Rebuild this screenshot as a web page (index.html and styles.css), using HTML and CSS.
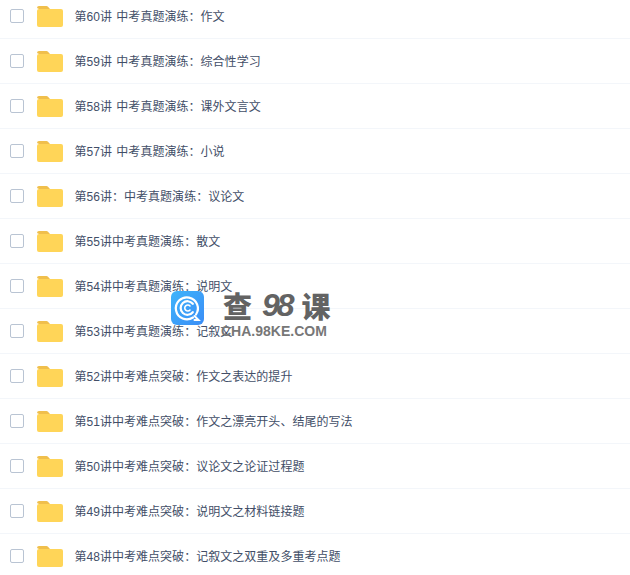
FILE: index.html
```html
<!DOCTYPE html>
<html lang="zh">
<head>
    <meta charset="UTF-8">
    <meta name="viewport" content="width=device-width, initial-scale=1.0">
    <title>文件列表</title>
    <link rel="stylesheet" href="styles.css">
</head>
<body>
    <ul class="file-list">
        <li class="file-row"><span class="check"></span><svg class="folder" viewBox="0 0 26 21"><use href="#folder-icon"></use></svg><span class="name">第60讲 中考真题演练：作文</span></li>
        <li class="file-row"><span class="check"></span><svg class="folder" viewBox="0 0 26 21"><use href="#folder-icon"></use></svg><span class="name">第59讲 中考真题演练：综合性学习</span></li>
        <li class="file-row"><span class="check"></span><svg class="folder" viewBox="0 0 26 21"><use href="#folder-icon"></use></svg><span class="name">第58讲 中考真题演练：课外文言文</span></li>
        <li class="file-row"><span class="check"></span><svg class="folder" viewBox="0 0 26 21"><use href="#folder-icon"></use></svg><span class="name">第57讲 中考真题演练：小说</span></li>
        <li class="file-row"><span class="check"></span><svg class="folder" viewBox="0 0 26 21"><use href="#folder-icon"></use></svg><span class="name">第56讲：中考真题演练：议论文</span></li>
        <li class="file-row"><span class="check"></span><svg class="folder" viewBox="0 0 26 21"><use href="#folder-icon"></use></svg><span class="name">第55讲中考真题演练：散文</span></li>
        <li class="file-row"><span class="check"></span><svg class="folder" viewBox="0 0 26 21"><use href="#folder-icon"></use></svg><span class="name">第54讲中考真题演练：说明文</span></li>
        <li class="file-row"><span class="check"></span><svg class="folder" viewBox="0 0 26 21"><use href="#folder-icon"></use></svg><span class="name">第53讲中考真题演练：记叙文</span></li>
        <li class="file-row"><span class="check"></span><svg class="folder" viewBox="0 0 26 21"><use href="#folder-icon"></use></svg><span class="name">第52讲中考难点突破：作文之表达的提升</span></li>
        <li class="file-row"><span class="check"></span><svg class="folder" viewBox="0 0 26 21"><use href="#folder-icon"></use></svg><span class="name">第51讲中考难点突破：作文之漂亮开头、结尾的写法</span></li>
        <li class="file-row"><span class="check"></span><svg class="folder" viewBox="0 0 26 21"><use href="#folder-icon"></use></svg><span class="name">第50讲中考难点突破：议论文之论证过程题</span></li>
        <li class="file-row"><span class="check"></span><svg class="folder" viewBox="0 0 26 21"><use href="#folder-icon"></use></svg><span class="name">第49讲中考难点突破：说明文之材料链接题</span></li>
        <li class="file-row"><span class="check"></span><svg class="folder" viewBox="0 0 26 21"><use href="#folder-icon"></use></svg><span class="name">第48讲中考难点突破：记叙文之双重及多重考点题</span></li>
    </ul>

    <div class="watermark">
        <svg class="wm-logo" viewBox="0 0 33 34">
            <defs>
                <linearGradient id="wm-grad" x1="0" y1="0" x2="1" y2="1">
                    <stop offset="0" stop-color="#3eb4fb"></stop>
                    <stop offset="1" stop-color="#3b8df6"></stop>
                </linearGradient>
            </defs>
            <rect width="33" height="34" rx="6" fill="url(#wm-grad)"></rect>
            <path d="M25 23.500a11 11 0 1 0-3 3" fill="none" stroke="#fff" stroke-width="2.200" stroke-linecap="round"></path>
            <path d="M21.800 12.800a6.800 6.800 0 1 0 0 8.400" fill="none" stroke="#fff" stroke-width="2.200" stroke-linecap="round"></path>
            <path d="M19 15a3 3 0 1 0 0 4" fill="none" stroke="#fff" stroke-width="1.600" stroke-linecap="round"></path>
            <path d="M23.500 25l4 4h-4" fill="none" stroke="#fff" stroke-width="2" stroke-linecap="round"></path>
        </svg>
        <div class="wm-text">
            <div class="wm-title">
                <span>查</span>
                <span class="wm-num">98</span>
                <span>课</span>
            </div>
            <div class="wm-url">CHA.98KE.COM</div>
        </div>
    </div>

    <svg class="icon-defs" width="0" height="0">
        <symbol id="folder-icon" viewBox="0 0 26 21">
            <path d="M0 2a2 2 0 0 1 2-2h7.500a2 2 0 0 1 1.500.700L13 3H2z" fill="#f0bf4c"></path>
            <rect y="3" width="26" height="18" rx="2" fill="#ffd558"></rect>
        </symbol>
    </svg>
</body>
</html>
```

FILE: styles.css
```css
* {
    margin: 0;
    padding: 0;
    box-sizing: border-box;
}

html, body {
    height: 100%;
    overflow: hidden;
}

body {
    position: relative;
    background-color: #fff;
    font-family: "Liberation Sans", "Noto Sans CJK SC", sans-serif;
}

.file-list {
    list-style: none;
    margin-top: -6px;
}

.file-row {
    display: flex;
    align-items: center;
    height: 45px;
    padding-left: 10px;
    border-bottom: 1px solid #f3f6fa;
}

.check {
    width: 14px;
    height: 14px;
    border: 1px solid #b9c4d3;
    border-radius: 2px;
    margin-right: 13px;
}

.folder {
    width: 26px;
    height: 21px;
    margin-right: 11.5px;
}

.name {
    font-size: 12px;
    letter-spacing: 0.03px;
    word-spacing: 1px;
    color: #424e67;
    padding-bottom: 2px;
}

.icon-defs {
    display: block;
    height: 0;
}

.watermark {
    position: absolute;
    left: 171px;
    top: 291px;
    display: flex;
    gap: 19px;
}

.wm-logo {
    width: 33px;
    height: 34px;
}

.wm-text {
    color: #636363;
    margin-top: -1px;
}

.wm-title {
    display: flex;
    align-items: center;
    gap: 10px;
    height: 30px;
    font-family: "Noto Sans CJK SC", sans-serif;
    font-size: 29px;
    font-weight: 900;
    line-height: 30px;
}

.wm-num {
    font-family: "Liberation Sans", sans-serif;
    font-size: 32px;
    font-weight: 700;
    font-style: italic;
    letter-spacing: -3px;
}

.wm-url {
    font-size: 14px;
    font-weight: 700;
    line-height: 16px;
    margin-left: -2px;
    margin-top: 3px;
    color: #777;
}
```
